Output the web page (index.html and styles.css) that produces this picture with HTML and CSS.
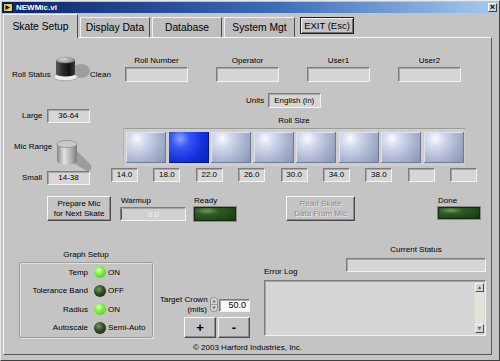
FILE: index.html
```html
<!DOCTYPE html>
<html lang="en">
<head>
  <meta charset="UTF-8" />
  <title>NEWMic.vi</title>
  <link rel="stylesheet" href="styles.css">
</head>
<body>
  <div class="window">
    <div class="titlebar">
      <svg class="app-icon" width="10" height="9" viewBox="0 0 10 9">
        <rect x="0.5" y="0.5" width="9" height="8" fill="#e6d45a" stroke="#111"/>
        <path d="M2.5 2 L7 4.5 L2.5 7 Z" fill="#111"/>
      </svg>
      <span class="title">NEWMic.vi</span>
      <span class="close">&times;</span>
    </div>

    <div class="tabbar">
      <div class="tab active">Skate Setup</div>
      <div class="tab">Display Data</div>
      <div class="tab">Database</div>
      <div class="tab wide">System Mgt</div>
      <button class="exit">EXIT (Esc)</button>
    </div>

    <div class="panel">
      <!-- roll status + text fields -->
      <div class="row r1">
        <div class="status">
          <span class="lbl status-lbl first">Roll Status</span>
          <svg class="knob" width="37" height="26" viewBox="0 0 37 26">
            <defs>
              <linearGradient id="body" x1="0" x2="1" y1="0" y2="0">
                <stop offset="0" stop-color="#5a5a5a"/>
                <stop offset="0.35" stop-color="#2c2c2c"/>
                <stop offset="0.7" stop-color="#141414"/>
                <stop offset="1" stop-color="#3c3c3c"/>
              </linearGradient>
              <radialGradient id="cap" cx="0.4" cy="0.4" r="0.7">
                <stop offset="0" stop-color="#d6d6d6"/>
                <stop offset="1" stop-color="#7c7c7c"/>
              </radialGradient>
            </defs>
            <ellipse cx="28" cy="15" rx="9" ry="7" fill="#9e9e9e"/>
            <ellipse cx="12.5" cy="21" rx="12" ry="3.8" fill="#ececec" stroke="#9a9a9a" stroke-width="0.8"/>
            <rect x="3" y="4" width="19" height="14" fill="url(#body)"/>
            <ellipse cx="12.5" cy="18" rx="9.5" ry="2.6" fill="url(#body)"/>
            <ellipse cx="12.5" cy="4" rx="9.5" ry="3.2" fill="url(#cap)"/>
          </svg>
          <span class="lbl status-lbl">Clean</span>
        </div>
        <div class="field"><span class="lbl">Roll Number</span><div class="box field-box"></div></div>
        <div class="field"><span class="lbl">Operator</span><div class="box field-box"></div></div>
        <div class="field"><span class="lbl">User1</span><div class="box field-box"></div></div>
        <div class="field"><span class="lbl">User2</span><div class="box field-box"></div></div>
      </div>

      <div class="row r2">
        <div class="units">
          <span class="lbl">Units</span>
          <div class="box units-box">English (in)</div>
        </div>
      </div>

      <div class="row r3">
        <div class="range">
          <span class="lbl range-lbl">Large</span>
          <div class="box range-box">36-64</div>
        </div>
        <div class="lbl roll-size">Roll Size</div>
      </div>

      <!-- mic range switch + roll size selector -->
      <div class="row r4">
        <div class="mic">
          <div class="mic-top">
            <span class="lbl mic-lbl">Mic Range</span>
            <svg class="lever" width="38" height="31" viewBox="0 0 38 31">
              <defs>
                <linearGradient id="lev" x1="0" x2="1" y1="0" y2="0">
                  <stop offset="0" stop-color="#858585"/>
                  <stop offset="0.35" stop-color="#e2e2e2"/>
                  <stop offset="0.7" stop-color="#b2b2b2"/>
                  <stop offset="1" stop-color="#7a7a7a"/>
                </linearGradient>
              </defs>
              <path d="M17 6 L36 25 Q38 31 32 31 L15 21 Z" fill="#9c9c9c"/>
              <rect x="2" y="4" width="20" height="17" fill="url(#lev)"/>
              <ellipse cx="12" cy="21" rx="10" ry="3.5" fill="url(#lev)"/>
              <ellipse cx="12" cy="4" rx="10" ry="3.6" fill="#c9c9c9" stroke="#8e8e8e" stroke-width="0.8"/>
            </svg>
          </div>
          <div class="range">
            <span class="lbl range-lbl">Small</span>
            <div class="box range-box">14-38</div>
          </div>
        </div>
        <div class="sizes">
          <div class="strip">
            <div class="cell"></div>
            <div class="cell on"></div>
            <div class="cell"></div>
            <div class="cell"></div>
            <div class="cell"></div>
            <div class="cell"></div>
            <div class="cell"></div>
            <div class="cell"></div>
          </div>
          <div class="values">
            <div class="box val">14.0</div>
            <div class="box val">18.0</div>
            <div class="box val">22.0</div>
            <div class="box val">26.0</div>
            <div class="box val">30.0</div>
            <div class="box val">34.0</div>
            <div class="box val">38.0</div>
            <div class="box val"></div>
            <div class="box val"></div>
          </div>
        </div>
      </div>

      <div class="row r5">
        <button class="btn prepare">Prepare Mic<br>for Next Skate</button>
        <div class="meter">
          <div class="lbl">Warmup</div>
          <div class="box bar"><span class="bar-fill"></span><span class="bar-text">0.0</span></div>
        </div>
        <div class="ready">
          <div class="lbl">Ready</div>
          <div class="led-rect"></div>
        </div>
        <button class="btn read" disabled>Read Skate<br>Data From Mic</button>
        <div class="done">
          <div class="lbl">Done</div>
          <div class="led-rect short"></div>
        </div>
      </div>

      <div class="row r6">
        <div class="graph">
          <div class="lbl graph-title">Graph Setup</div>
          <div class="group">
            <span class="g-lbl">Temp</span><span class="led on"></span><span class="g-val">ON</span>
            <span class="g-lbl">Tolerance Band</span><span class="led"></span><span class="g-val">OFF</span>
            <span class="g-lbl">Radius</span><span class="led on"></span><span class="g-val">ON</span>
            <span class="g-lbl">Autoscale</span><span class="led"></span><span class="g-val">Semi-Auto</span>
          </div>
        </div>

        <div class="crown">
          <div class="crown-top">
            <div class="lbl crown-lbl">Target Crown<br>(mils)</div>
            <svg class="spin" width="8" height="15" viewBox="0 0 8 15">
              <rect x="0.5" y="0.5" width="7" height="14" rx="3" fill="#d9d9d9" stroke="#8c8c8c"/>
              <line x1="1" y1="7.5" x2="7" y2="7.5" stroke="#9a9a9a"/>
              <path d="M4 2.5 L6 5.5 L2 5.5 Z" fill="#7a7a7a"/>
              <path d="M4 12.5 L6 9.5 L2 9.5 Z" fill="#7a7a7a"/>
            </svg>
            <div class="box num">50.0</div>
          </div>
          <div class="pm">
            <button class="btn pm-btn">+</button>
            <button class="btn pm-btn">-</button>
          </div>
        </div>

        <div class="log">
          <div class="log-top">
            <div class="lbl log-lbl">Error Log</div>
            <div class="cur">
              <div class="lbl cur-lbl">Current Status</div>
              <div class="box cur-box"></div>
            </div>
          </div>
          <div class="box log-box">
            <div class="scroll">
              <span class="sbtn">&#9652;</span>
              <span class="sbtn">&#9662;</span>
            </div>
          </div>
        </div>
      </div>

      <div class="copyright">&copy; 2003 Harford Industries, Inc.</div>
    </div>
  </div>
</body>
</html>
```

FILE: styles.css
```css
body {
  margin: 0;
  font-family: "Liberation Sans", Arial, sans-serif;
  font-size: 8px;
  color: #000;
  background: #c4c4c4;
}
.window {
  width: 500px;
  height: 361px;
  box-sizing: border-box;
  border: 1px solid;
  border-color: #e8e8e8 #404040 #404040 #e8e8e8;
  padding: 1px;
  background: #c4c4c4;
  overflow: hidden;
}
.titlebar {
  height: 11px;
  display: flex;
  align-items: center;
  padding: 0 1px;
  background: linear-gradient(90deg, #0a246a, #3c6cb8 55%, #a6caf0);
}
.title {
  color: #fff;
  font-weight: bold;
  font-size: 8px;
  margin-left: 3px;
}
.close {
  margin-left: auto;
  width: 9px;
  height: 9px;
  box-sizing: border-box;
  background: #d4d0c8;
  border: 1px solid;
  border-color: #fff #404040 #404040 #fff;
  font-size: 9px;
  line-height: 7px;
  font-weight: bold;
  text-align: center;
}

/* tabs */
.tabbar {
  display: flex;
  align-items: flex-end;
  height: 24px;
  padding-left: 1px;
}
.tab {
  width: 70px;
  height: 20px;
  box-sizing: border-box;
  margin-left: 2px;
  border: 1px solid;
  border-color: #f2f2f2 #4e4e4e transparent #f2f2f2;
  border-bottom: none;
  font-size: 10.3px;
  line-height: 19px;
  text-align: center;
  background: #bebebe;
}
.tab.wide {
  width: 71px;
}
.tab.active {
  position: relative;
  width: 75px;
  height: 24px;
  margin-left: 0;
  margin-bottom: -1px;
  line-height: 23px;
  background: #c4c4c4;
}
.exit {
  align-self: flex-start;
  margin: 4px 0 0 5px;
  width: 54px;
  height: 17px;
  padding: 0;
  font-family: inherit;
  font-size: 9.5px;
  color: #000;
  background: #c4c4c4;
  border: 1px solid #1e1e1e;
  box-shadow: inset 1px 1px 0 #f6f6f6, inset -1px -1px 0 #6e6e6e;
}

.panel {
  width: 489px;
  height: 318px;
  box-sizing: border-box;
  margin-left: 1px;
  border: 1px solid;
  border-color: #f4f4f4 #5a5a5a #5a5a5a #f4f4f4;
}
.row {
  display: flex;
  align-items: flex-start;
}
.lbl {
  line-height: 10px;
  white-space: nowrap;
}
.box {
  box-sizing: border-box;
  background: #d6d6d6;
  border: 1px solid;
  border-color: #7c7c7c #f2f2f2 #f2f2f2 #7c7c7c;
  box-shadow: inset 1px 1px 0 #a6a6a6;
}

/* row 1 */
.r1 {
  margin-top: 18px;
}
.status {
  display: flex;
  width: 113px;
  margin-left: 8px;
}
.status-lbl {
  margin-top: 14px;
}
.status-lbl.first {
  width: 41px;
}
.field {
  width: 63px;
  display: flex;
  flex-direction: column;
  align-items: center;
}
.field + .field {
  margin-left: 28px;
}
.field-box {
  width: 63px;
  height: 15px;
  margin-top: 1px;
}

/* row 2 */
.r2 {
  margin-top: 11px;
}
.units {
  display: flex;
  align-items: center;
  margin-left: 242px;
}
.units-box {
  width: 53px;
  height: 15px;
  margin-left: 4px;
  padding-left: 5px;
  line-height: 13px;
}

/* row 3 */
.r3 {
  margin-top: 1px;
}
.range {
  display: flex;
  align-items: center;
  margin-left: 18px;
}
.range-lbl {
  width: 25px;
}
.range-box {
  width: 43px;
  height: 14px;
  line-height: 12px;
  text-align: center;
}
.roll-size {
  width: 342px;
  margin: 7px 0 0 33px;
  text-align: center;
}

/* row 4 */
.r4 {
  margin-top: 2px;
}
.mic {
  width: 106px;
}
.mic-top {
  display: flex;
  height: 43px;
}
.mic-lbl {
  width: 41px;
  margin: 14px 0 0 10px;
}
.lever {
  margin-top: 12px;
}
.strip {
  display: flex;
  gap: 2.5px;
  width: 342px;
  height: 38px;
  box-sizing: border-box;
  margin-left: 13px;
  padding: 3px 0 0 2px;
  background: #cecece;
  border-top: 1px solid #9c9c9c;
  border-left: 1px solid #b4b4b4;
}
.cell {
  width: 40px;
  height: 31px;
  background: radial-gradient(circle at 28% 22%, #fbfcff 0, #d4daee 22%, #a9b3cf 60%, #8591b2 100%);
  box-shadow: inset -1px -1px 0 #6f7a98, inset 1px 1px 0 #dfe3ef;
}
.cell.on {
  background: radial-gradient(circle at 28% 22%, #8aa2ff 0, #3656f4 25%, #1530de 60%, #0a1eb0 100%);
  box-shadow: inset -1px -1px 0 #081a80;
}
.values {
  display: flex;
  gap: 15.4px;
  margin: 2px 0 0 1px;
}
.val {
  width: 27px;
  height: 14px;
  line-height: 12px;
  text-align: center;
}

/* buttons */
.btn {
  box-sizing: border-box;
  padding: 0;
  font-family: inherit;
  font-size: 8px;
  line-height: 10px;
  color: #000;
  background: #c4c4c4;
  border: 1px solid;
  border-color: #f6f6f6 #4a4a4a #4a4a4a #f6f6f6;
  box-shadow: inset -1px -1px 0 #8c8c8c;
}

/* row 5 */
.r5 {
  margin-top: 11px;
}
.prepare {
  width: 64px;
  height: 25px;
  margin-left: 43px;
}
.meter {
  margin-left: 9px;
}
.meter .lbl {
  padding-left: 1px;
}
.bar {
  display: flex;
  align-items: center;
  width: 66px;
  height: 14px;
  margin-top: 1px;
  color: #f4f4f4;
  background: #d0d0d0;
}
.bar-fill {
  width: 1px;
  height: 10px;
  background: #3048a8;
}
.bar-text {
  flex: 1;
  text-align: center;
}
.ready {
  margin-left: 8px;
}
.led-rect {
  width: 42px;
  height: 14px;
  box-sizing: border-box;
  margin-top: 1px;
  border: 1px solid #1c2618;
  background: radial-gradient(ellipse at 30% 25%, #6e9a5e 0, #2f5c22 30%, #12380c 100%);
  box-shadow: 0 0 0 1px #8a8a8a;
}
.led-rect.short {
  height: 12px;
}
.read {
  width: 69px;
  height: 25px;
  margin-left: 50px;
  color: #8c8c8c;
  text-shadow: 1px 1px 0 #ececec;
}
.done {
  margin-left: 83px;
}

/* row 6 */
.r6 {
  margin-top: 24px;
}
.graph {
  width: 134px;
  margin-left: 15px;
}
.graph-title {
  margin-top: 5px;
  text-align: center;
}
.group {
  display: grid;
  grid-template-columns: 68px 18px auto;
  grid-auto-rows: 18.5px;
  align-items: center;
  height: 76px;
  box-sizing: border-box;
  margin-top: 2px;
  border: 1px solid #9e9e9e;
  border-radius: 2px;
  box-shadow: inset 1px 1px 0 #e2e2e2, 1px 1px 0 #e2e2e2;
}
.g-lbl {
  text-align: right;
  white-space: nowrap;
}
.g-val {
  padding-left: 2px;
  white-space: nowrap;
}
.led {
  justify-self: end;
  width: 12px;
  height: 12px;
  border-radius: 50%;
  background: radial-gradient(circle at 40% 35%, #7c9a6c 0, #2c4c22 45%, #0e220a 100%);
}
.led.on {
  background: radial-gradient(circle at 40% 35%, #e6ffc8 0, #86f24a 35%, #3cbc1c 100%);
}
.crown {
  width: 90px;
  margin-left: 7px;
}
.crown-top {
  display: flex;
  align-items: flex-start;
  margin-top: 50px;
}
.crown-lbl {
  width: 47px;
  text-align: right;
}
.spin {
  margin: 2px 0 0 3px;
}
.num {
  width: 31px;
  height: 13px;
  margin: 4px 0 0 1px;
  padding-right: 3px;
  font-size: 9px;
  line-height: 11px;
  text-align: right;
  background: #fafafa;
}
.pm {
  display: flex;
  gap: 2px;
  margin: 2px 0 0 24px;
}
.pm-btn {
  width: 32px;
  height: 21px;
  font-size: 13px;
  font-weight: bold;
}
.log {
  width: 222px;
  margin-left: 14px;
}
.log-top {
  display: flex;
  justify-content: space-between;
}
.log-lbl {
  margin-top: 22px;
}
.cur {
  width: 140px;
}
.cur-lbl {
  text-align: center;
}
.cur-box {
  height: 14px;
  margin-top: 3px;
}
.log-box {
  display: flex;
  justify-content: flex-end;
  height: 56px;
  margin-top: 3px;
  padding: 2px 1px 2px 0;
}
.scroll {
  display: flex;
  flex-direction: column;
  justify-content: space-between;
  width: 9px;
  background: #e2e2da;
}
.sbtn {
  width: 9px;
  height: 9px;
  box-sizing: border-box;
  background: #d4d4d4;
  border: 1px solid;
  border-color: #f6f6f6 #505050 #505050 #f6f6f6;
  font-size: 6px;
  line-height: 7px;
  text-align: center;
  color: #555;
}
.copyright {
  margin-top: 5px;
  line-height: 10px;
  text-align: center;
}
```
